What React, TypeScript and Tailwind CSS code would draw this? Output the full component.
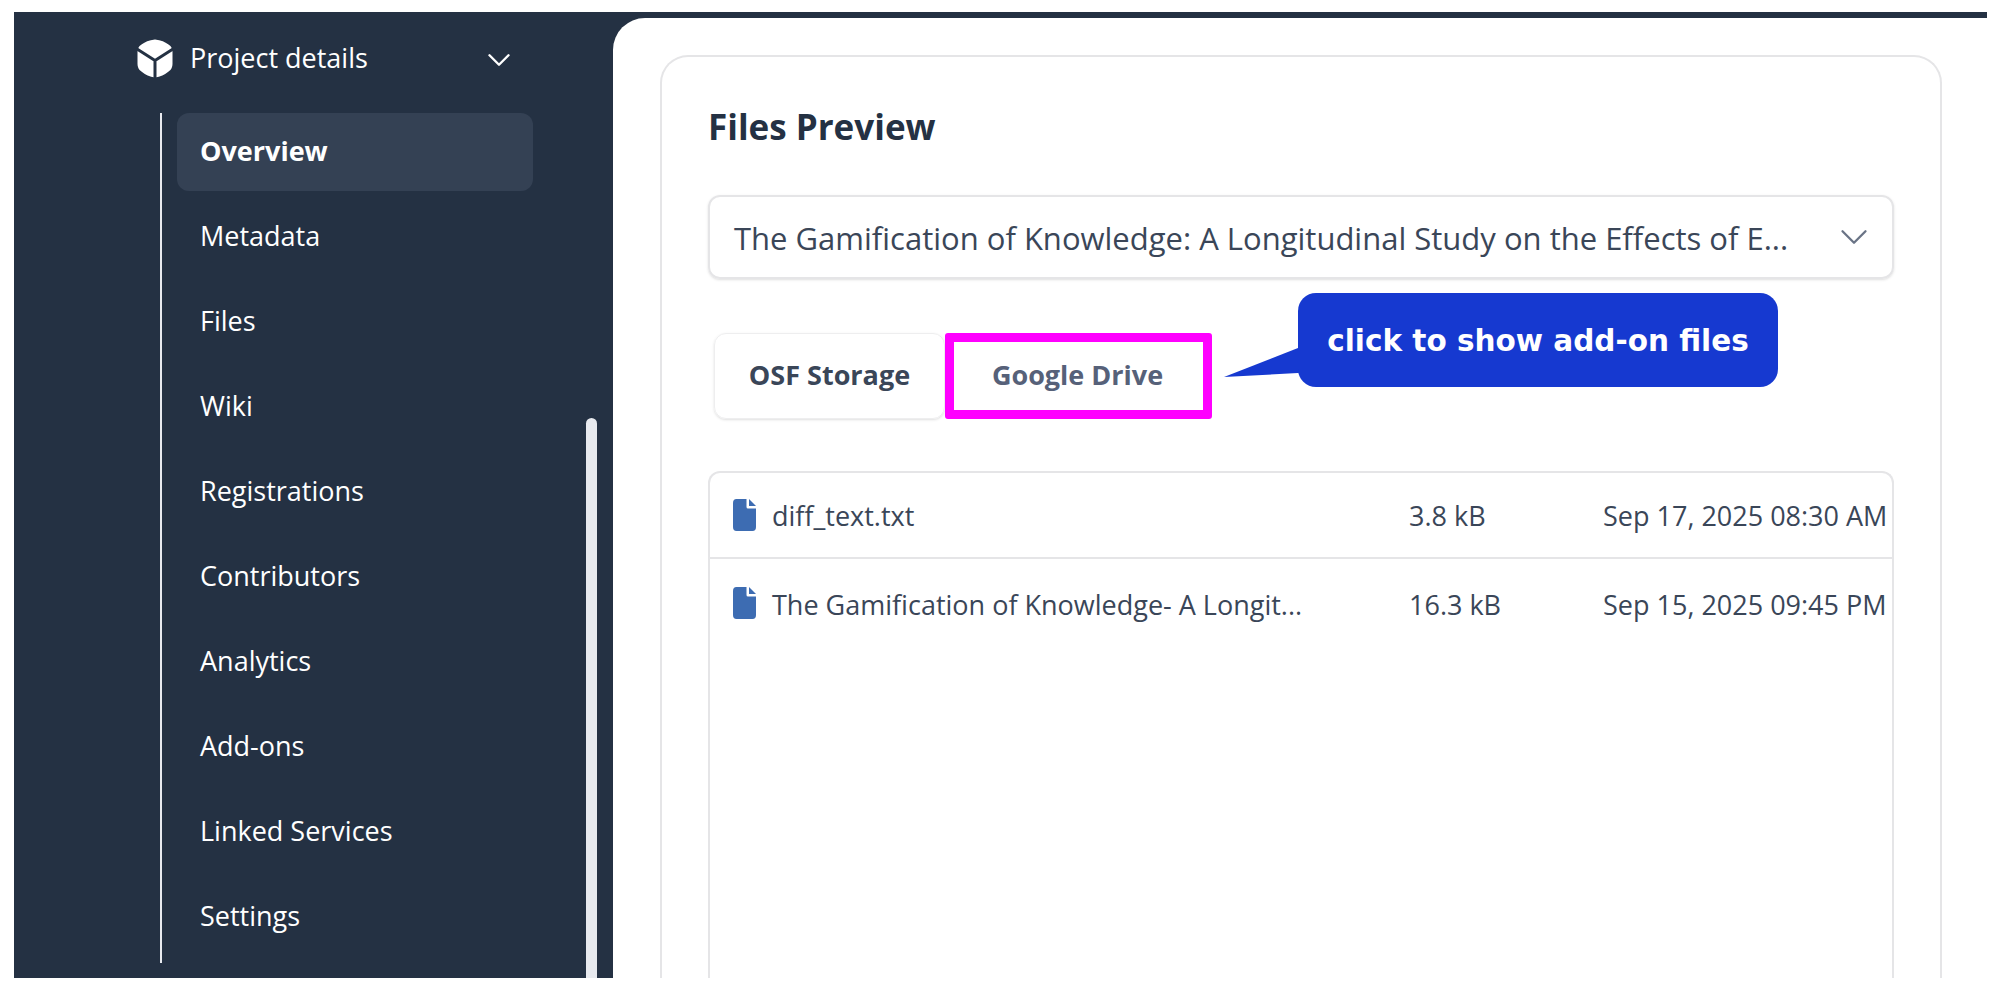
import React from "react";
import { ChevronDown } from "lucide-react";

const navItems = [
  "Overview",
  "Metadata",
  "Files",
  "Wiki",
  "Registrations",
  "Contributors",
  "Analytics",
  "Add-ons",
  "Linked Services",
  "Settings",
];

const files = [
  { name: "diff_text.txt", size: "3.8 kB", date: "Sep 17, 2025 08:30 AM" },
  {
    name: "The Gamification of Knowledge- A Longit...",
    size: "16.3 kB",
    date: "Sep 15, 2025 09:45 PM",
  },
];

function CubeIcon() {
  return (
    <svg viewBox="0 0 36 39" className="w-[36px] h-[39px] shrink-0">
      <path
        d="M18 2 Q26 3 31 7 Q34 9 34 13 V25 Q34 29 31 31 Q25 36 18 37 Q11 36 5 31 Q2 29 2 25 V13 Q2 9 5 7 Q10 3 18 2 Z"
        fill="#ffffff"
        stroke="#ffffff"
        strokeWidth="3"
        strokeLinejoin="round"
      />
      <path d="M0 10 L18 21.500 L36 10 M18 21.500 V39" fill="none" stroke="#243143" strokeWidth="3" />
    </svg>
  );
}

function FileIcon() {
  return (
    <svg viewBox="0 0 23 32" className="w-[23px] h-[32px] shrink-0" fill="#3d6cb2">
      <path d="M3.500 0 H13.500 V8 Q13.500 9.500 15 9.500 H23 V28 Q23 32 19.500 32 H3.500 Q0 32 0 28 V4 Q0 0 3.500 0 Z" />
      <path d="M16 0 L23 7 H16 Z" />
    </svg>
  );
}

function Sidebar() {
  return (
    <aside className="relative w-[599px] shrink-0 pt-[22px]">
      <div className="flex items-center h-12 pl-[123px] pr-[95px] text-white text-[27px]">
        <CubeIcon />
        <span className="ml-[17px] flex-1">Project details</span>
        <ChevronDown size={38} strokeWidth={1.5} className="mt-[3px]" />
      </div>
      <nav className="ml-[146px] mt-[31px] w-[373px] border-l-2 border-[#e8eaef] pl-[15px] pb-[7px] flex flex-col gap-[7px]">
        {navItems.map((item, i) => (
          <div
            key={item}
            className={`h-[78px] flex items-center pl-[23px] pb-[2px] rounded-xl text-[27px] text-white ${
              i === 0 ? "bg-[#344154] font-bold" : ""
            }`}
          >
            {item}
          </div>
        ))}
      </nav>
      {/* scrollbar thumb */}
      <div className="absolute left-[572px] top-[406px] bottom-0 w-[11px] rounded-t-md bg-[#e8eaef]" />
    </aside>
  );
}

function FilesPreview() {
  return (
    <section className="h-[960px] w-[1282px] ml-[47px] mt-[37px] border-2 border-b-0 border-[#e5e5e7] rounded-t-[28px] px-[46px] pt-[45px] overflow-hidden">
      <h2 className="text-[35px] leading-[50px] font-bold text-[#243143]">Files Preview</h2>
      <div className="mt-[43px] h-[84px] flex items-center justify-between border-2 border-[#e5e5e7] rounded-xl pl-6 pr-[15px] shadow-sm">
        <span className="pt-[2px] text-[31px] text-[#3a4658] whitespace-nowrap">
          The Gamification of Knowledge: A Longitudinal Study on the Effects of E...
        </span>
        <ChevronDown size={46} strokeWidth={1.2} className="text-[#6a7486]" />
      </div>
      <div className="relative mt-[54px] ml-[6px] flex h-[86px]">
        <div className="w-[231px] flex items-center justify-center pb-[2px] rounded-xl border border-[#eeeeef] shadow-sm text-[27px] font-bold text-[#3a4658]">
          OSF Storage
        </div>
        <div className="w-[267px] flex items-center justify-center pb-[2px] pr-[2px] rounded-[3px] border-[9px] border-[#ff00ff] text-[27px] font-bold text-[#566179]">
          Google Drive
        </div>
        {/* annotation callout over the tabs */}
        <svg
          viewBox="0 0 80 32"
          className="absolute left-[510px] top-[14px] w-[80px] h-[32px]"
          fill="#1639d0"
        >
          <path d="M0 30 L74 1 L80 1 L80 25 L74 26 Z" />
        </svg>
        <div className="absolute left-[584px] top-[-40px] w-[480px] h-[94px] flex items-center justify-center pt-[2px] rounded-[18px] bg-[#1639d0] text-white text-[29.500px] font-bold font-['DejaVu_Sans',sans-serif]">
          click to show add-on files
        </div>
      </div>
      <div className="mt-[52px] h-[600px] border-2 border-b-0 border-[#e5e5e7] rounded-t-xl overflow-hidden">
        {files.map((f, i) => (
          <div
            key={f.name}
            className={`flex items-center pl-[23px] text-[27px] text-[#3a4658] whitespace-nowrap ${
              i === 0 ? "h-[86px] border-b-2 border-[#e5e5e7]" : "h-[88px]"
            }`}
          >
            <FileIcon />
            <div className={`ml-4 flex ${i === 0 ? "pt-[2px]" : "pt-[4px]"}`}>
              <span className="w-[637px]">{f.name}</span>
              <span className="w-[194px]">{f.size}</span>
              <span>{f.date}</span>
            </div>
          </div>
        ))}
      </div>
    </section>
  );
}

export default function App() {
  return (
    <div className="h-screen bg-white pt-3 pl-[14px] pr-[13px] font-['Open_Sans',sans-serif]">
      <div className="flex h-[966px] bg-[#243143] overflow-hidden">
        <Sidebar />
        <main className="flex-1 mt-[6px] bg-white rounded-tl-[32px] overflow-hidden">
          <FilesPreview />
        </main>
      </div>
    </div>
  );
}
